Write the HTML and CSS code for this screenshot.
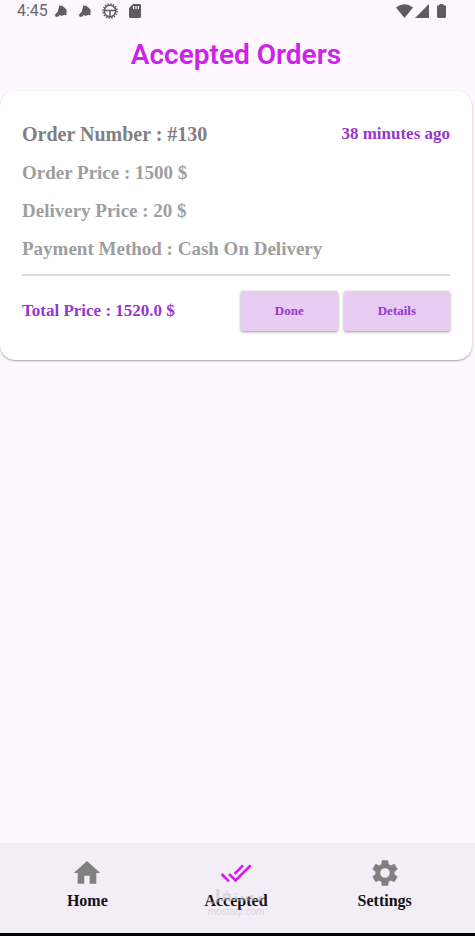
FILE: index.html
```html
<!DOCTYPE html>
<html lang="en">
<head>
<meta charset="utf-8">
<meta name="viewport" content="width=device-width, initial-scale=1">
<title>Accepted Orders</title>
<link rel="stylesheet" href="styles.css">
</head>
<body>
<div class="status">
  <span class="clock">4:45</span>
  <svg class="glyph bell" viewBox="0 0 14 14"><path d="M5.500 1l1.200 1.200L8 1.500l4.500 4V11l-1 .5-1-1L8 12 6 11l-2.500 2-2-.5L1 10.500 3.500 8z"/></svg>
  <svg class="glyph bell" viewBox="0 0 14 14"><path d="M5.500 1l1.200 1.200L8 1.500l4.500 4V11l-1 .5-1-1L8 12 6 11l-2.500 2-2-.5L1 10.500 3.500 8z"/></svg>
  <svg class="glyph wheel" viewBox="0 0 16 16"><circle cx="8" cy="8" r="7" fill="none" stroke-width="1.600" stroke-dasharray="1.400 1.350"/><circle cx="8" cy="8" r="5.700" fill="none" stroke-width="1.500"/><path d="M2.500 7.500h11M8 7.500v6" fill="none" stroke-width="1.500"/></svg>
  <svg class="glyph card-glyph" viewBox="0 0 12 14"><path fill-rule="evenodd" d="M4 0h7l1 1v12l-1 1H1l-1-1V4zM4 2v3h1.200V2zm2.400 0v3h1.200V2zm2.400 0v3H10V2z"/></svg>
  <span class="spacer"></span>
  <svg class="glyph wifi" viewBox="0 0 17 14"><path d="M0 3.500Q8.500-3 17 3.500L8.500 14z"/></svg>
  <svg class="glyph" viewBox="0 0 14 14"><path d="M14 0v14H0z"/></svg>
  <svg class="glyph battery" viewBox="0 0 9 14"><path d="M2.500 0h4v1.300H8l1 1V13l-1 1H1l-1-1V2.300l1-1h1.500z"/></svg>
</div>
<header><h1>Accepted Orders</h1></header>
<main>
  <article class="order">
    <div class="row">
      <h2>Order Number : #130</h2>
      <span class="ago">38 minutes ago</span>
    </div>
    <p>Order Price : 1500 $</p>
    <p>Delivery Price : 20 $</p>
    <p>Payment Method : Cash On Delivery</p>
    <hr>
    <div class="row">
      <strong class="total">Total Price : 1520.0 $</strong>
      <div class="actions">
        <button type="button">Done</button>
        <button type="button">Details</button>
      </div>
    </div>
  </article>
</main>
<nav>
  <a href="#home"><svg viewBox="0 0 24 24"><path d="M10 20v-6h4v6h5v-8h3L12 3 2 12h3v8z"/></svg>Home</a>
  <a href="#accepted" class="active"><svg viewBox="0 0 24 24"><path d="m18 7-1.410-1.410-6.340 6.340 1.410 1.410zm4.240-1.410L11.660 16.170 7.480 12l-1.410 1.410L11.660 19l12-12zM.41 13.410 6 19l1.410-1.410L1.830 12z"/></svg>Accepted
    <span class="mark" aria-hidden="true"><span class="mark-name" lang="ar" dir="rtl">مستقل</span><span>mostaql.com</span></span>
  </a>
  <a href="#settings"><svg viewBox="0 0 24 24"><path d="M19.140 12.940c.04-.3.060-.61.060-.94 0-.32-.02-.64-.07-.94l2.030-1.580c.18-.14.230-.41.120-.61l-1.920-3.320c-.12-.22-.37-.29-.59-.22l-2.390.960c-.5-.38-1.030-.7-1.620-.94L14.400 2.810c-.04-.24-.24-.41-.48-.41h-3.840c-.24 0-.43.170-.47.410l-.36 2.540c-.59.240-1.130.570-1.620.940l-2.390-.96c-.22-.08-.47 0-.59.220L2.740 8.870c-.12.210-.08.470.120.610l2.030 1.580c-.05.300-.09.630-.09.940s.02.640.070.940l-2.030 1.580c-.18.140-.23.410-.12.610l1.920 3.320c.12.220.37.290.59.220l2.390-.96c.5.380 1.030.7 1.620.940l.36 2.540c.05.240.24.410.48.410h3.840c.24 0 .44-.17.470-.41l.36-2.540c.59-.24 1.130-.56 1.620-.94l2.390.960c.22.080.47 0 .59-.22l1.920-3.320c.12-.22.070-.47-.12-.61zM12 15.600A3.600 3.600 0 1 1 12 8.400a3.600 3.600 0 0 1 0 7.200z"/></svg>Settings</a>
</nav>
</body>
</html>
```
FILE: styles.css
```css
* { box-sizing: border-box; }

body {
  margin: 0;
  min-height: 100vh;
  display: flex;
  flex-direction: column;
  background: #fef7ff;
  font-family: "Liberation Serif", serif;
  font-weight: 700;
  border-bottom: 3px solid #000;
}

.status {
  display: flex;
  align-items: center;
  gap: 10px;
  height: 22px;
  padding: 0 29px 0 17px;
  color: #6b676c;
  font: 400 16px/22px Roboto, sans-serif;
}
.glyph { width: 14px; height: 14px; fill: #5f5b60; stroke: #5f5b60; stroke-width: 0; }
.clock { margin-right: -4px; }
.wheel { width: 16px; height: 16px; }
.card-glyph { width: 12px; margin-left: 1px; }
.wifi { width: 17px; margin-right: -8px; }
.battery { width: 9px; margin-left: -2px; }
.spacer { flex: 1; }

h1 {
  margin: 0;
  padding: 15px 3px 18px 0;
  color: #cc22ea;
  text-align: center;
  font: 600 28px/36px Roboto, sans-serif;
}

main { flex: 1; padding-right: 3px; }
.order {
  padding: 23px 22px 29px;
  border-radius: 15px;
  background: #fff;
  box-shadow: 0 1px 2px rgba(0, 0, 0, .35);
}
.row { display: flex; align-items: center; justify-content: space-between; }
h2 { margin: 0; color: #808080; font-size: 20px; line-height: 40px; }
.order p { margin: 0; color: #9e9e9e; font-size: 19px; line-height: 38px; }
.ago, .total { color: #9637cc; font-size: 17px; line-height: 38px; }
hr { height: 2px; margin: 6px 0 15px; border: 0; background: #dadada; }

.actions { display: flex; gap: 6px; }
button {
  height: 40px;
  padding: 0 34px;
  border: 0;
  border-radius: 2px;
  background: #e8ccf1;
  box-shadow: 0 1px 3px rgba(0, 0, 0, .4);
  color: #9637cc;
  font: inherit;
  font-size: 13px;
}

nav {
  display: flex;
  height: 90px;
  padding: 14px 16px 0 13px;
  background: #f3edf7;
}
nav a {
  position: relative;
  flex: 1;
  display: flex;
  flex-direction: column;
  align-items: center;
  color: #111;
  font-size: 16px;
  line-height: 24px;
  text-decoration: none;
}
nav svg { width: 32px; height: 32px; fill: #808080; }
nav .active svg { fill: #d41ced; }
.mark {
  position: absolute;
  top: 29px;
  left: 0;
  right: 0;
  display: flex;
  flex-direction: column;
  align-items: center;
  color: rgba(190, 185, 195, .5);
  font: 400 10px/12px "Liberation Sans", sans-serif;
}
.mark-name { font: 700 16px/20px "DejaVu Sans", sans-serif; }
```
